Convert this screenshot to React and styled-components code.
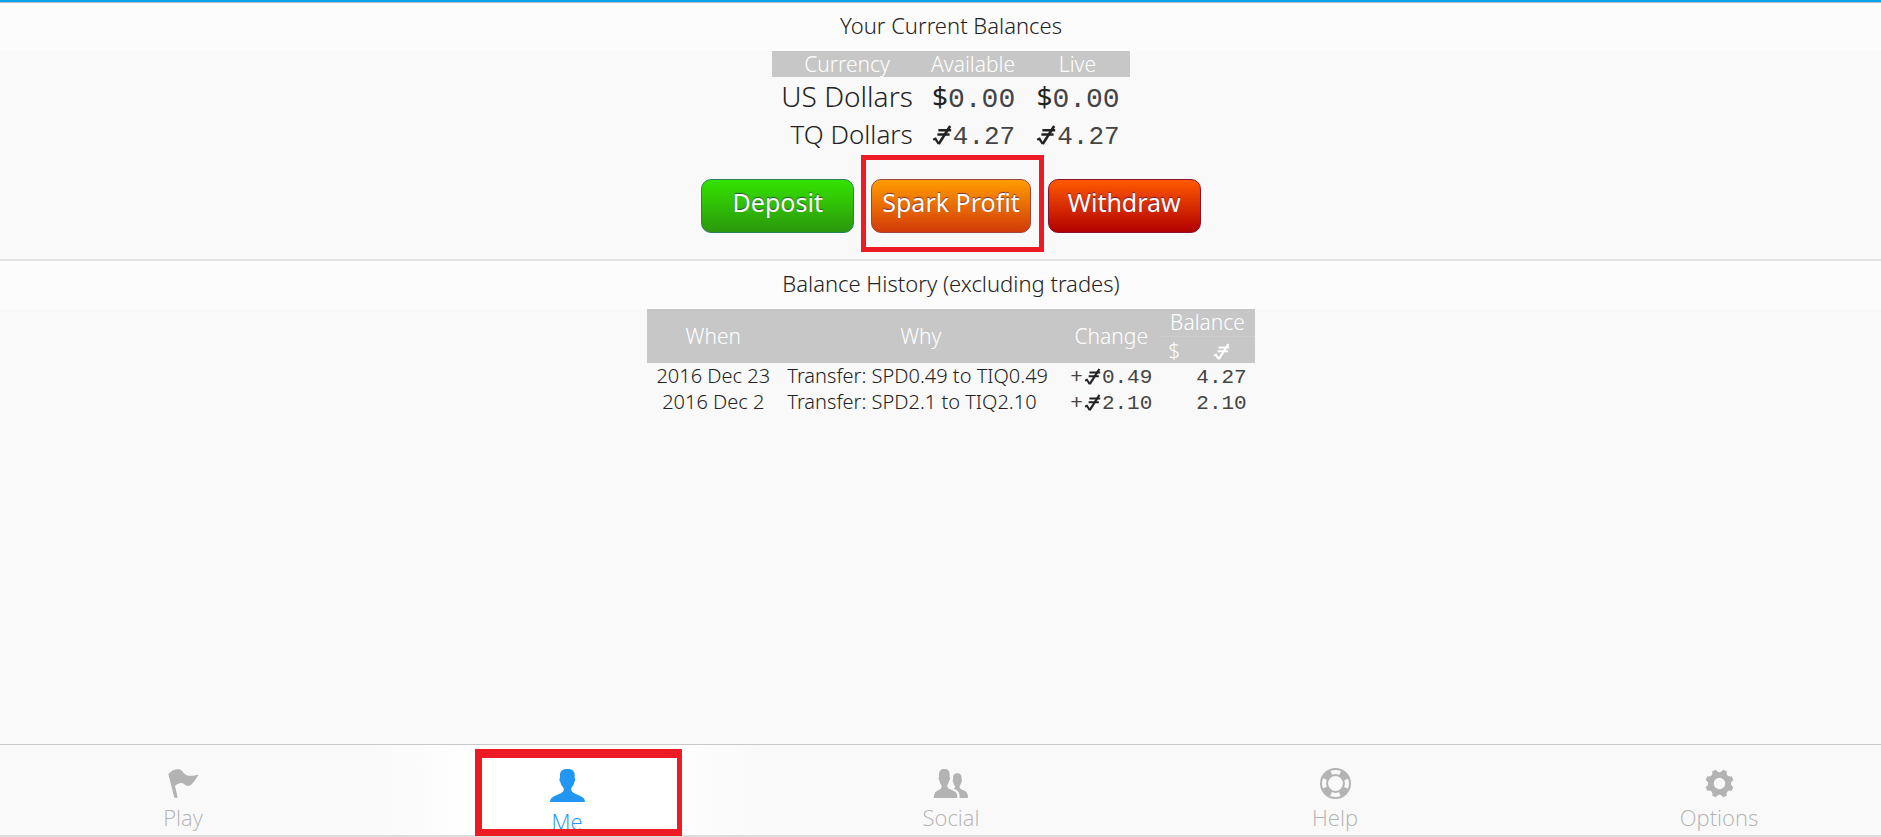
import styled, { createGlobalStyle, css } from "styled-components";

const balances = [
  { currency: "US Dollars", sign: "$", available: "0.00", live: "0.00", big: true },
  { currency: "TQ Dollars", sign: "TQ", available: "4.27", live: "4.27" },
];

const history = [
  { when: "2016 Dec 23", why: "Transfer: SPD0.49 to TIQ0.49", change: "0.49", usd: "", tq: "4.27" },
  { when: "2016 Dec 2", why: "Transfer: SPD2.1 to TIQ2.10", change: "2.10", usd: "", tq: "2.10" },
];

const tabs = [
  { name: "Play", Icon: FlagIcon },
  { name: "Me", Icon: PersonIcon, active: true },
  { name: "Social", Icon: PeopleIcon },
  { name: "Help", Icon: LifebuoyIcon },
  { name: "Options", Icon: GearIcon },
];

function TQSign() {
  return (
    <Sign viewBox="0 0 54 58" role="img" aria-label="TQ" fill="none" stroke="currentColor">
      <path d="M16 13H55M13 26H50" strokeWidth="7" />
      <path d="M52 0L17 55" strokeWidth="8" />
      <path d="M0 42L7 39L17 55" strokeWidth="7" />
    </Sign>
  );
}

function CurrencySign({ sign }) {
  return sign === "TQ" ? <TQSign /> : <Dollar>{sign}</Dollar>;
}

function FlagIcon() {
  return (
    <svg width="31" height="29" viewBox="0 0 93 87" fill="currentColor">
      <path d="M1 16C9 4 24-1 34 1C44 3 46 18 62 20C72 21 84 18 92 17C85 27 79 38 71 46C63 53 56 52 49 46C42 40 34 40 21 50L29 86H19Z" />
    </svg>
  );
}

function PersonIcon() {
  return (
    <svg width="35" height="33" viewBox="0 0 105 99" fill="currentColor">
      <path d="M52 0C65 0 74 5 74 18V27C77 28 76 37 73 39C72 47 67 53 64 57C63 64 65 69 71 72L91 81C101 86 105 91 105 99H0C0 91 4 86 14 81L34 72C40 69 42 64 41 57C37 53 32 47 31 39C28 37 27 28 30 27V18C30 5 39 0 52 0Z" />
    </svg>
  );
}

function PeopleIcon() {
  return (
    <svg width="34" height="29" viewBox="0 0 102 87" fill="currentColor">
      <path d="M31 0C42 0 47 6 47 16V24C49 26 49 32 46 34C45 40 42 45 40 48C39 54 42 57 47 60L61 67C68 70 70 75 70 87H0C0 75 2 70 9 66L18 61C23 58 24 54 22 48C19 45 17 40 16 34C13 32 13 26 15 24V16C15 6 20 0 31 0Z" />
      <path d="M70 13C79 13 83 18 83 27V32C85 34 84 39 82 40C81 45 79 49 77 51C76 56 78 59 82 61L93 66C99 69 102 75 102 87H77C77 72 73 65 63 61L59 59C62 57 64 55 63 51C60 49 59 45 58 40C55 38 56 34 57 32V27C57 18 61 13 70 13Z" />
    </svg>
  );
}

function LifebuoyIcon() {
  return (
    <svg width="31" height="31" viewBox="-46 -46 92 92" fill="none" stroke="currentColor">
      <circle r="43" strokeWidth="6" />
      <circle r="25" strokeWidth="6" />
      <circle r="34" strokeWidth="14" pathLength="8" strokeDasharray="1 1" strokeDashoffset="-0.5" />
    </svg>
  );
}

function GearIcon() {
  return (
    <svg width="29" height="29" viewBox="-44 -44 88 88" fill="currentColor">
      <circle r="26" fill="none" stroke="currentColor" strokeWidth="17" />
      {[0, 1, 2, 3, 4, 5, 6, 7].map((n) => (
        <path key={n} d="M-13-31Q-7-36-6-43L6-43Q7-36 13-31Z" transform={`rotate(${22.5 + n * 45})`} />
      ))}
    </svg>
  );
}

function App() {
  return (
    <Page>
      <GlobalStyle />
      <Content>
        <Panel>
          <PanelTitle>Your Current Balances</PanelTitle>
          <BalanceTable>
            <thead>
              <tr>
                <th scope="col">Currency</th>
                <th scope="col">Available</th>
                <th scope="col">Live</th>
              </tr>
            </thead>
            <tbody>
              {balances.map((b) => (
                <BalanceRow key={b.currency} $big={b.big}>
                  <td>{b.currency}</td>
                  <td>
                    <CurrencySign sign={b.sign} />
                    <Mono>{b.available}</Mono>
                  </td>
                  <td>
                    <CurrencySign sign={b.sign} />
                    <Mono>{b.live}</Mono>
                  </td>
                </BalanceRow>
              ))}
            </tbody>
          </BalanceTable>
          <Actions>
            <ActionButton $from="#35e300" $to="#2b970c" $edge="#27805a">Deposit</ActionButton>
            <ActionButton $from="#ff9d00" $to="#d23a08" $edge="#a0443c" $marked>Spark Profit</ActionButton>
            <ActionButton $from="#ff5a00" $to="#b10000" $edge="#8c1030">Withdraw</ActionButton>
          </Actions>
        </Panel>

        <Panel>
          <PanelTitle>Balance History (excluding trades)</PanelTitle>
          <HistoryTable>
            <thead>
              <tr>
                <th scope="col" rowSpan={2}>When</th>
                <th scope="col" rowSpan={2}>Why</th>
                <th scope="col" rowSpan={2}>Change</th>
                <GroupHead scope="colgroup" colSpan={2}>Balance</GroupHead>
              </tr>
              <tr>
                <th scope="col">$</th>
                <th scope="col"><TQSign /></th>
              </tr>
            </thead>
            <tbody>
              {history.map((h) => (
                <tr key={h.when}>
                  <When>{h.when}</When>
                  <Why>{h.why}</Why>
                  <Amount>+<TQSign />{h.change}</Amount>
                  <Amount>{h.usd}</Amount>
                  <Amount $wide>{h.tq}</Amount>
                </tr>
              ))}
            </tbody>
          </HistoryTable>
        </Panel>
      </Content>

      <TabBar>
        {tabs.map(({ name, Icon, active }) => (
          <Tab key={name} href={`#${name.toLowerCase()}`} $active={active} aria-current={active ? "page" : undefined}>
            <IconBox $active={active}>
              <Icon />
            </IconBox>
            <TabLabel>{name}</TabLabel>
          </Tab>
        ))}
      </TabBar>
    </Page>
  );
}

const GlobalStyle = createGlobalStyle`
  *, *::after {
    box-sizing: border-box;
  }
  body {
    margin: 0;
    background: #f9f9f9;
    color: #222;
    font-family: "Noto Sans", "Open Sans", sans-serif;
    font-weight: 300;
  }
`;

const marker = css`
  content: "";
  position: absolute;
  border: 5px solid #ed1c24;
  pointer-events: none;
`;

const Page = styled.div`
  display: flex;
  flex-direction: column;
  min-height: 100vh;
  overflow: hidden;
  border-top: 2px solid #0aa5ee;
`;

const Content = styled.main`
  flex: 1;
  border-top: 1px solid #b5bfc4;
`;

const Panel = styled.section`
  display: flex;
  flex-direction: column;
  align-items: center;
  padding-left: 21px;
  background: linear-gradient(#fcfcfc, #fcfcfc) top / 100% 48px no-repeat;

  & + & {
    border-top: 2px solid #e1e1e1;
  }
`;

const PanelTitle = styled.h2`
  margin: 0;
  padding-bottom: 4px;
  font-size: 22px;
  font-weight: 300;
  line-height: 44px;
`;

const Table = styled.table`
  border-collapse: collapse;

  th {
    background: #c7c7c7;
    color: #fff;
    font-size: 21px;
    font-weight: 300;
    line-height: 26px;
  }
  td {
    white-space: nowrap;
  }
`;

const BalanceTable = styled(Table)`
  th, td {
    padding: 0 10px;
  }
  th:first-child, td:first-child {
    padding: 0 8px 0 9px;
  }
`;

const BalanceRow = styled.tr`
  height: 38px;
  font-size: ${(p) => (p.$big ? 28 : 26)}px;
  line-height: 34px;
  text-align: right;
`;

const Mono = styled.span`
  color: #444;
  font-family: "Liberation Mono", monospace;
  line-height: 1;
`;

const Dollar = styled.span`
  font-weight: 400;
`;

const Sign = styled.svg`
  width: 18px;
  height: 19px;
  margin: 0 2px;
  overflow: visible;
  vertical-align: -1px;
`;

const Actions = styled.div`
  display: flex;
  gap: 17px;
  margin: 26px 0;
`;

const ActionButton = styled.button`
  position: relative;
  min-width: 153px;
  height: 54px;
  padding: 0 10px 8px;
  border: 1px solid ${(p) => p.$edge};
  border-radius: 10px;
  background: linear-gradient(${(p) => p.$from}, ${(p) => p.$to});
  color: #fff;
  font: inherit;
  font-size: 25px;
  font-weight: 400;
  text-shadow: 0 -1px 1px rgba(40, 0, 120, 0.6);
  cursor: pointer;

  ${(p) =>
    p.$marked &&
    css`
      &::after {
        ${marker}
        inset: -25px -14px -20px -11px;
      }
    `}
`;

const HistoryTable = styled(Table)`
  font-size: 20px;
  line-height: 26px;

  th {
    height: 27px;
  }
  th, td {
    padding: 0 8px;
  }
  ${Sign} {
    width: 15px;
    height: 16px;
    margin: 0 2px;
    vertical-align: -2px;
  }
`;

const GroupHead = styled.th`
  border-bottom: 1px solid #cdcdcd;
`;

const When = styled.td`
  min-width: 132px;
  text-align: center;
`;

const Why = styled.td`
  min-width: 283px;
`;

const Amount = styled.td`
  min-width: ${(p) => (p.$wide ? 66 : 28)}px;
  color: #444;
  font-family: "Liberation Mono", monospace;
  font-size: 21px;
  line-height: 22px;
  text-align: right;

  && {
    padding-top: 4px;
  }
  ${Sign} {
    color: #222;
  }
`;

const TabBar = styled.nav`
  display: grid;
  grid-template-columns: repeat(5, 1fr);
  height: 93px;
  margin: 0 -30px 0 -9px;
  border-top: 1px solid #c8c8c8;
  border-bottom: 2px solid #dcdcdc;
`;

const Tab = styled.a`
  position: relative;
  display: flex;
  flex-direction: column;
  align-items: center;
  padding-top: 24px;
  color: #b3b3b3;
  text-decoration: none;

  ${(p) =>
    p.$active &&
    css`
      color: #2196f3;
      background: linear-gradient(90deg, #f9f9f9, #fff 25%, #fff 75%, #f9f9f9);

      &::after {
        ${marker}
        border-width: 9px 5px 7px 7px;
        top: 4px;
        bottom: -1px;
        left: calc(50% - 92px);
        width: 207px;
      }
    `}
`;

const IconBox = styled.span`
  display: flex;
  align-items: center;
  justify-content: center;
  height: ${(p) => (p.$active ? 33 : 29)}px;

  svg {
    flex: none;
  }
`;

const TabLabel = styled.span`
  margin-top: 6px;
  font-family: "Open Sans", sans-serif;
  font-size: 22px;
  line-height: 26px;
`;

export default App;
